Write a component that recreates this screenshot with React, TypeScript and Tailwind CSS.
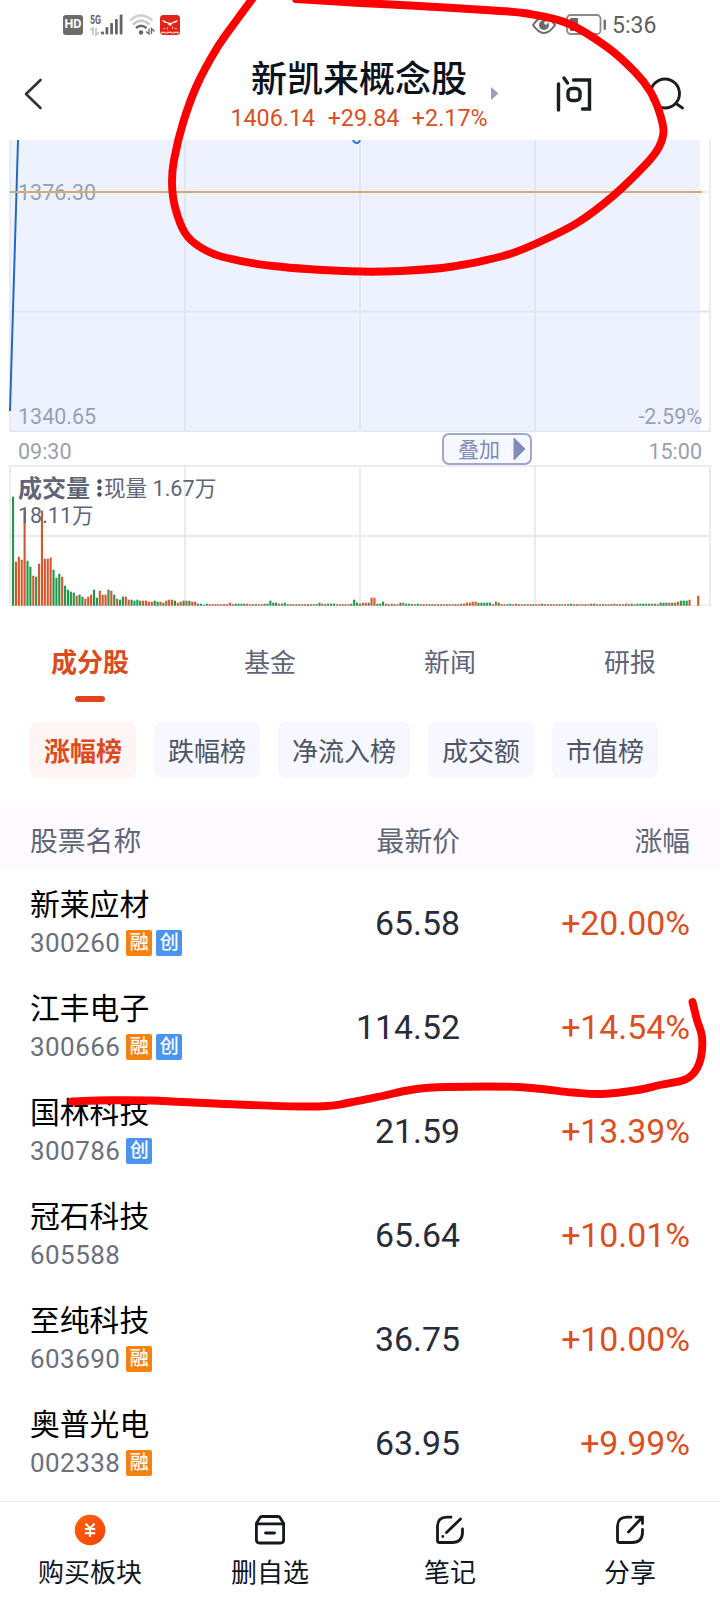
import React from "react";

type Point = [number, number];

const CIRCLE_POINTS: Point[] = [
  [256, -6], [236, 21], [217, 48], [197, 85], [183, 123], [174, 160], [172, 183], [175, 207], [185, 233], [200, 247],
  [223, 257], [273, 266], [350, 271.300], [400, 271], [453, 266.500], [503, 256], [535, 244], [577, 223], [613, 196], [647, 163],
  [659, 147], [663.500, 131], [659, 111], [650, 91], [635, 72], [607, 47], [567, 23], [527, 13.500], [493, 10.500], [410, 5.500], [360, 3], [296, -1],
];
const LINE_POINTS: Point[] = [
  [72, 1101.500], [110, 1100.300], [150, 1100.500], [183, 1102], [250, 1105], [300, 1106.500], [327, 1106], [345, 1103.500], [380, 1096.500],
  [413, 1089.500], [447, 1087], [518, 1087], [573, 1092.500], [602, 1094], [638, 1090], [660, 1085], [684, 1080], [695, 1071.500],
  [701, 1057], [702, 1037], [697, 1020], [692.500, 1002],
];

// Catmull-Rom spline through the points, written as cubic Béziers.
function smooth(p: Point[]) {
  let d = `M${p[0][0]} ${p[0][1]}`;
  for (let i = 0; i < p.length - 1; i++) {
    const a = p[Math.max(0, i - 1)];
    const b = p[i];
    const c = p[i + 1];
    const e = p[Math.min(p.length - 1, i + 2)];
    d += ` C${b[0] + (c[0] - a[0]) / 6} ${b[1] + (c[1] - a[1]) / 6} ${c[0] - (e[0] - b[0]) / 6} ${c[1] - (e[1] - b[1]) / 6} ${c[0]} ${c[1]}`;
  }
  return d;
}

const early =
  "109g 44r 49r 46r 95r 45g 39g 30r 29g 42r 95r 47r 47r 48r 36g 28g 32g 29r 20g 16g 14g 13g 10r 11g 9g 7r 9r 11r 16g 8g 15r 11r 11r 16g 15r 11g 7r 6g 9g 9r 6r 6g 5g 6g 5g 5r 5r 4r 4r 5g 4g 4r 3g 5r 6r 6r 5g 3r 4r 5g 5r 5g 4r 4r 2g 2g 1g 2g"
    .split(" ")
    .map((s) => ({ h: parseInt(s, 10), up: s.endsWith("r") }));

const peaks: Record<number, string> = {
  75: "3r", 77: "2g", 78: "2g", 79: "2g", 80: "2g", 81: "2r", 87: "2g", 88: "2g", 89: "5g", 90: "3g", 91: "3g",
  92: "2r", 93: "2g", 94: "3g", 106: "3g", 107: "2r", 109: "2g", 110: "2g", 111: "2g", 117: "2g", 118: "6g",
  119: "3g", 120: "2g", 121: "3r", 122: "3r", 123: "3g", 124: "8r", 125: "8r", 126: "2g", 127: "2g", 128: "4g",
  129: "2r", 131: "2r", 134: "3g", 135: "3r", 136: "2g", 137: "2g", 140: "2g", 155: "2r", 156: "2r", 157: "3r",
  158: "3r", 159: "4r", 160: "4r", 161: "3g", 162: "3g", 163: "3g", 164: "3g", 165: "3g", 167: "4r", 168: "3g",
  172: "2g", 174: "2r", 183: "2g", 193: "2g", 200: "2r", 201: "2g", 208: "2r", 212: "2r", 214: "2g", 216: "2g",
  217: "2g", 218: "2g", 219: "2g", 220: "2g", 221: "2r", 222: "2g", 224: "3g", 225: "3g", 226: "3g", 227: "3r",
  228: "3g", 229: "3r", 230: "4r", 231: "5g", 232: "5g", 233: "5g", 234: "6r", 235: "0r", 236: "0r", 237: "10r",
};

const volumes = Array.from({ length: 238 }, (_, i) => {
  if (i < early.length) return early[i];
  const s = peaks[i];
  if (s) return { h: parseInt(s, 10), up: s.endsWith("r") };
  return { h: 1.5, up: i < 76 || i % 3 !== 0 };
});

const stocks = [
  { name: "新莱应材", code: "300260", tags: ["融", "创"], price: "65.58", change: "+20.00%" },
  { name: "江丰电子", code: "300666", tags: ["融", "创"], price: "114.52", change: "+14.54%" },
  { name: "国林科技", code: "300786", tags: ["创"], price: "21.59", change: "+13.39%" },
  { name: "冠石科技", code: "605588", tags: [], price: "65.64", change: "+10.01%" },
  { name: "至纯科技", code: "603690", tags: ["融"], price: "36.75", change: "+10.00%" },
  { name: "奥普光电", code: "002338", tags: ["融"], price: "63.95", change: "+9.99%" },
];

function StatusBar() {
  return (
    <div className="flex h-12 items-center pt-px pl-[63px]">
      <div className="flex h-5 w-5 items-center justify-center rounded-[3px] bg-[#6b6b6b] text-[12.5px] font-bold text-white">
        HD
      </div>
      <svg className="ml-[7px] overflow-visible" width="33" height="22" viewBox="0 0 33 22">
        <text x="0" y="9.500" fontSize="12" fontWeight="700" fill="#666" textLength="11" lengthAdjust="spacingAndGlyphs">5G</text>
        <path d="M3 21v-7l-2.500 2.500M6 14v7l3-3" stroke="#c4c4c4" strokeWidth="1.700" fill="none" />
        <g fill="#666">
          <rect x="11" y="17.500" width="3" height="3" rx="1" />
          <rect x="15.500" y="13" width="2.800" height="7.500" rx="1" />
          <rect x="20.200" y="9" width="2.800" height="11.500" rx="1" />
          <rect x="25" y="5" width="2.800" height="15.500" rx="1" />
          <rect x="29.700" y="0.500" width="2.800" height="20" rx="1" />
        </g>
      </svg>
      <svg className="ml-[6px]" width="26" height="21" viewBox="0 0 26 21" fill="none">
        <path d="M1 6.500 Q12 -3.500 23.500 6.500" stroke="#d0d0d0" strokeWidth="2.600" />
        <path d="M4 10.500 Q12 3 20.500 10.500" stroke="#c8c8c8" strokeWidth="2.600" />
        <path d="M7 14 Q12 9.500 17.500 14" stroke="#666" strokeWidth="2.600" />
        <circle cx="12" cy="18.500" r="2.200" fill="#666" />
        <path d="M20 14.500v5.500l-3-2.500M22.500 20v-5.500l3 3" stroke="#666" strokeWidth="1.300" />
      </svg>
      <svg className="ml-[5px]" width="20" height="20" viewBox="0 0 20 20">
        <rect width="20" height="20" rx="3.500" fill="#e3221a" />
        <path d="M2 4.800 L7 7 L10 8 L13 7 L18 4.800 L16.500 7.300 L12 8.600 L11 10.500H9L8 8.600L3.500 7.300Z" fill="#fff" />
        <path d="M3 13.500h3M14 13.500h3M7.500 12v3M12.500 11v3" stroke="#f49b86" strokeWidth="1" />
        <path d="M1.500 18.800v-1.500h3.500v1.500M7 18.800v-1.500h5v1.500M14 18.800v-1.500h4v1.500" stroke="#fbd0c8" strokeWidth="1.200" fill="none" />
      </svg>
      <svg className="ml-[352px]" width="24" height="20" viewBox="0 0 24 20" fill="none">
        <path d="M1 10 Q12 -6 23 10 Q12 26 1 10Z" stroke="#6b6b6b" strokeWidth="2" />
        <circle cx="12" cy="10" r="5" fill="#6b6b6b" />
        <circle cx="14" cy="8" r="1.800" fill="#fff" />
      </svg>
      <svg className="ml-[10px]" width="41" height="21" viewBox="0 0 41 21" fill="none">
        <rect x="1" y="1" width="33.500" height="19" rx="3.500" stroke="#8a8a8a" strokeWidth="1.800" />
        <rect x="4" y="4" width="8" height="13" rx="1" fill="#666" />
        <rect x="37.500" y="5.500" width="2.500" height="10.500" rx="1" fill="#777" />
      </svg>
      <span className="mt-[2px] ml-[5px] text-[23px] leading-6 text-[#606060]">5:36</span>
    </div>
  );
}

function Header() {
  return (
    <header className="flex h-[92px] items-start">
      <svg className="mt-[30px] ml-6" width="19" height="32" viewBox="0 0 19 32" fill="none">
        <path d="M16.500 2 L2 16 L16.500 30" stroke="#333" strokeWidth="2.600" strokeLinecap="round" strokeLinejoin="round" />
      </svg>
      <div className="ml-[174px] flex w-[284px] flex-col items-center">
        <h1 className="mt-[9px] text-[36px] leading-[46px] font-medium whitespace-nowrap text-[#0b121c]">新凯来概念股</h1>
        <div className="mt-px flex gap-[12.5px] text-[23.3px] leading-7 whitespace-nowrap text-[#d94f1f]">
          <span>1406.14</span>
          <span>+29.84</span>
          <span>+2.17%</span>
        </div>
      </div>
      <svg className="mt-[39px] -ml-[10px]" width="8" height="14" viewBox="0 0 8 14">
        <path d="M0 0 L7.500 6.500 L0 13Z" fill="#9aa0b8" />
      </svg>
      <svg className="mt-[27px] ml-[57px]" width="36" height="37" viewBox="0 0 36 37" fill="none" stroke="#1c1f22" strokeWidth="3.400" strokeLinecap="round">
        <path d="M2.500 9v26" />
        <path d="M8 3l3.500 5" />
        <path d="M17.500 5h16v29h-7" />
        <rect x="12" y="13.500" width="12" height="12" rx="4" />
      </svg>
      <svg className="mt-[29px] ml-[57px]" width="36" height="34" viewBox="0 0 36 34" fill="none" stroke="#1c1f22" strokeWidth="2.900" strokeLinecap="round">
        <circle cx="16" cy="16.500" r="14.500" />
        <path d="M27 26.500l6.500 4.500" />
      </svg>
    </header>
  );
}

function PriceChart() {
  return (
    <div className="relative h-[292px]">
      <svg width="720" height="292" viewBox="0 0 720 292" fill="none">
        <rect x="10" y="0" width="690" height="291" fill="#eef2ff" />
        <path d="M185 0V291M360 0V291M535 0V291M10 171.500H710" stroke="#dfe5f2" strokeWidth="1.800" />
        <path d="M700 52H710M10 0V291.300H710V0" stroke="#e4e6ee" strokeWidth="1.500" />
        <path d="M18 0 L16.500 52 L10 271" stroke="#2468c4" strokeWidth="2" />
        <path d="M353 0 Q354 3 357 3 Q359 3 360 0" stroke="#2e6fe0" strokeWidth="1.800" />
      </svg>
      <span className="absolute top-[40px] left-[18px] text-[21.5px] leading-[26px] text-[#98a0b5]">1376.30</span>
      <svg className="absolute top-[51px] left-[10px]" width="692" height="2" viewBox="0 0 692 2">
        <path d="M0 1H692" stroke="#d6a777" strokeWidth="2" />
      </svg>
      <span className="absolute top-[264px] left-[18px] text-[21.5px] leading-[26px] text-[#98a0b5]">1340.65</span>
      <span className="absolute top-[264px] right-[18px] text-[21.5px] leading-[26px] text-[#98a0b5]">-2.59%</span>
    </div>
  );
}

function TimeAxis() {
  return (
    <div className="flex h-[33px] items-center pr-[18px] pl-[18px] text-[21.5px] leading-[26px] text-[#9a9fae]">
      <span className="mt-[7px] w-[60px]">09:30</span>
      <div className="ml-[364px] flex h-8 w-[90px] items-center rounded-[7px] border-2 border-[#9da8cb] bg-[#f7f8ff] pl-[14px] text-[21px] text-[#7f8abd]">
        <span className="mt-[2px] leading-6">叠加</span>
        <svg className="ml-[13px]" width="13" height="24" viewBox="0 0 13 24">
          <path d="M1 1 L12 12 L1 23Z" fill="#7f8abd" stroke="#7f8abd" strokeLinejoin="round" />
        </svg>
      </div>
      <span className="mt-[7px] ml-auto">15:00</span>
    </div>
  );
}

function VolumeChart() {
  return (
    <div className="relative h-[141px]">
      <svg width="720" height="141" viewBox="0 0 720 141" fill="none">
        <path d="M185 1V140M360 1V140M535 1V140M10 71H710" stroke="#e8eaf0" strokeWidth="1.800" />
        <path d="M10 140.500V1H710V140.500Z" stroke="#e6e8ee" strokeWidth="1.700" />
        {volumes.map((v, i) => (
          <rect key={i} x={12 + i * 2.891} y={140.700 - v.h} width="2.100" height={v.h} fill={v.up ? "#d4562b" : "#1f9649"} />
        ))}
      </svg>
      <div className="absolute top-[9px] left-[18px] flex items-center text-[22px] leading-[30px] text-[#5f6579]">
        <span className="text-[24px] font-bold">成交量</span>
        <svg className="-mt-[2px] ml-[7px]" width="5" height="18" viewBox="0 0 5 18" fill="#4b5061">
          <circle cx="2.500" cy="2.500" r="2.200" />
          <circle cx="2.500" cy="9" r="2.200" />
          <circle cx="2.500" cy="15.500" r="2.200" />
        </svg>
        <span className="ml-[2px] text-[21.6px]">现量 1.67万</span>
      </div>
      <span className="absolute top-[37px] left-[18px] text-[21.5px] leading-[28px] text-[#5f6579]">18.11万</span>
    </div>
  );
}

function Tabs() {
  return (
    <nav className="flex h-[116px] pt-[39px] text-[26px] leading-[36px] text-[#5f6679]">
      <div className="flex w-[180px] flex-col items-center font-bold text-[#dc4a20]">
        成分股
        <span className="mt-[15px] h-[6px] w-[30px] rounded-full bg-[#e2441b]" />
      </div>
      {["基金", "新闻", "研报"].map((t) => (
        <div key={t} className="w-[180px] text-center">{t}</div>
      ))}
    </nav>
  );
}

function Filters() {
  return (
    <div className="flex h-[86px] gap-[18px] pl-[30px] text-[26px] leading-[60px] whitespace-nowrap text-[#4f5566]">
      <span className="h-14 rounded-lg bg-[#fff5f5] px-[14px] font-bold text-[#dc4a20]">涨幅榜</span>
      {["跌幅榜", "净流入榜", "成交额", "市值榜"].map((t) => (
        <span key={t} className="h-14 rounded-lg bg-[#f6f7ff] px-[14px]">{t}</span>
      ))}
    </div>
  );
}

function StockTable() {
  return (
    <section>
      <div className="flex h-[62px] items-center bg-[#fefaff] px-[30px] pt-[6px] text-[27.8px] leading-10 text-[#5f6679]">
        <span className="w-[200px]">股票名称</span>
        <span className="w-[230px] text-right">最新价</span>
        <span className="flex-1 text-right">涨幅</span>
      </div>
      {stocks.map((s) => (
        <div key={s.code} className="flex h-[104px] items-center px-[30px]">
          <div className="flex w-[200px] flex-col pt-[2px]">
            <span className="text-[29.8px] leading-[40px] text-black">{s.name}</span>
            <div className="flex h-9 items-center gap-1">
              <span className="mr-[2px] text-[26px] leading-9 tracking-[0.45px] text-[#6b7080]">{s.code}</span>
              {s.tags.map((t) => (
                <span
                  key={t}
                  className={
                    t === "融"
                      ? "-mt-px h-[26px] w-[26px] rounded-[2px] bg-[#f5820f] text-center text-[19px] leading-[26px] font-medium text-white"
                      : "-mt-px h-[26px] w-[26px] rounded-[2px] bg-[#4a94ee] text-center text-[19px] leading-[26px] font-medium text-white"
                  }
                >
                  {t}
                </span>
              ))}
            </div>
          </div>
          <span className="mt-[4px] w-[230px] text-right text-[33.8px] leading-10 text-[#272c3a]">{s.price}</span>
          <span className="mt-[4px] flex-1 text-right text-[33.8px] leading-10 text-[#dc4f20]">{s.change}</span>
        </div>
      ))}
    </section>
  );
}

const stroke = { fill: "none", stroke: "#15191d", strokeWidth: 2.8, strokeLinecap: "round", strokeLinejoin: "round" } as const;

function BottomBar() {
  const items = [
    {
      label: "购买板块",
      icon: (
        <svg width="32" height="32" viewBox="0 0 32 32">
          <defs>
            <linearGradient id="coin" x1="0" y1="0" x2="1" y2="1">
              <stop offset="0" stopColor="#ff6408" />
              <stop offset="1" stopColor="#f73f0c" />
            </linearGradient>
          </defs>
          <circle cx="16" cy="16" r="15.300" fill="url(#coin)" />
          <path d="M11.500 9.500L16 14.500L20.500 9.500M16 14.500V23M10.800 15h10.400M10.800 19.300h10.400" fill="none" stroke="#fff" strokeWidth="2.100" />
        </svg>
      ),
    },
    {
      label: "删自选",
      icon: (
        <svg width="32" height="32" viewBox="0 0 32 32" {...stroke}>
          <path d="M2.400 9.500L6 3.500Q6.500 2.500 8 2.500H24Q25.500 2.500 26 3.500L29.600 9.500V26Q29.600 29 26.600 29H5.400Q2.400 29 2.400 26Z" />
          <path d="M2.400 9.800H29.600M11.500 19h9" />
        </svg>
      ),
    },
    {
      label: "笔记",
      icon: (
        <svg width="32" height="32" viewBox="0 0 32 32" {...stroke}>
          <path d="M17 3.200H13Q3.500 3.200 3.500 13V26.500Q3.500 28.500 5.500 28.500H18Q28.500 28.500 28.500 18V15" />
          <path d="M26.500 5L12.500 18.500M8.800 22.500V22.600" />
        </svg>
      ),
    },
    {
      label: "分享",
      icon: (
        <svg width="32" height="32" viewBox="0 0 32 32" {...stroke}>
          <path d="M17 3.200H13Q3.500 3.200 3.500 13V26.500Q3.500 28.500 5.500 28.500H18Q28.500 28.500 28.500 18V15.500" />
          <path d="M22 3.200H28.500V9.500M28 3.700L14.500 18" />
        </svg>
      ),
    },
  ];
  return (
    <nav className="mt-[7px] flex h-[99px] border-t border-[#ececec] pt-3">
      {items.map((it) => (
        <div key={it.label} className="flex w-[180px] flex-col items-center">
          {it.icon}
          <span className="mt-[8px] text-[26px] leading-[38px] text-[#10161f]">{it.label}</span>
        </div>
      ))}
    </nav>
  );
}

export default function App() {
  return (
    <div className="relative h-[1600px] w-[720px] overflow-hidden bg-white font-[Roboto,'Noto_Sans_CJK_SC',sans-serif]">
      <StatusBar />
      <Header />
      <PriceChart />
      <TimeAxis />
      <VolumeChart />
      <Tabs />
      <Filters />
      <StockTable />
      <BottomBar />
      <svg className="pointer-events-none absolute top-0 left-0" width="720" height="1600" viewBox="0 0 720 1600" fill="none" stroke="#ff0000" strokeWidth="7.900" strokeLinecap="round" strokeLinejoin="round">
        <path d={smooth(CIRCLE_POINTS)} />
        <path d={smooth(LINE_POINTS)} />
      </svg>
    </div>
  );
}
